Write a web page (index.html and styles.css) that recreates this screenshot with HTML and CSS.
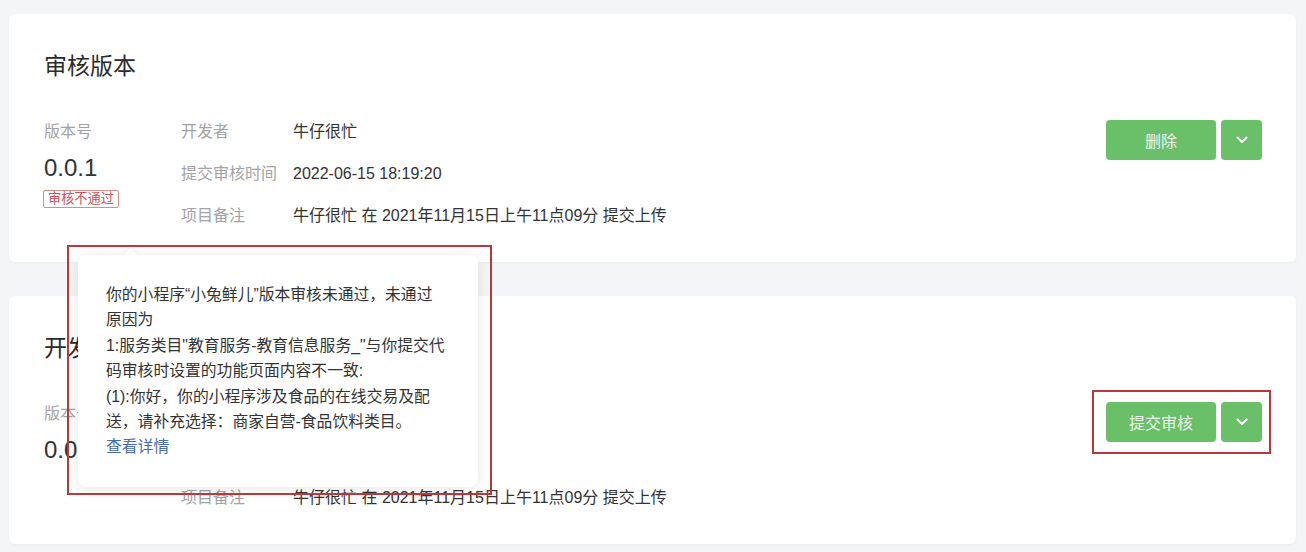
FILE: index.html
```html
<!DOCTYPE html>
<html lang="zh-CN">
<head>
<meta charset="utf-8">
<title>版本管理</title>
<link rel="stylesheet" href="styles.css">
</head>
<body>
<div class="page">
  <section class="card">
    <h2 class="card-title">审核版本</h2>
    <div class="card-body">
      <div class="ver-col">
        <div class="ver-label">版本号</div>
        <div class="ver-num">0.0.1</div>
        <span class="tag-fail">审核不通过</span>
      </div>
      <div class="info">
        <div class="row"><span class="label">开发者</span><span class="value">牛仔很忙</span></div>
        <div class="row"><span class="label">提交审核时间</span><span class="value">2022-06-15 18:19:20</span></div>
        <div class="row"><span class="label">项目备注</span><span class="value">牛仔很忙 在 2021年11月15日上午11点09分 提交上传</span></div>
      </div>
      <div class="actions">
        <button class="btn btn-main">删除</button>
        <button class="btn btn-drop"><svg width="12" height="8" viewBox="0 0 12 8"><path d="M1.5 1.5 L6 6 L10.5 1.5" fill="none" stroke="#fff" stroke-width="2" stroke-linecap="round" stroke-linejoin="round"/></svg></button>
      </div>
    </div>
  </section>

  <section class="card card-second">
    <h2 class="card-title">开发版本</h2>
    <div class="card-body">
      <div class="ver-col">
        <div class="ver-label">版本号</div>
        <div class="ver-num">0.0.1</div>
      </div>
      <div class="info">
        <div class="row"><span class="label">开发者</span><span class="value">牛仔很忙</span></div>
        <div class="row"><span class="label">提交时间</span><span class="value">2021-11-15 11:09:20</span></div>
        <div class="row"><span class="label">项目备注</span><span class="value">牛仔很忙 在 2021年11月15日上午11点09分 提交上传</span></div>
      </div>
      <div class="actions">
        <button class="btn btn-main">提交审核</button>
        <button class="btn btn-drop"><svg width="12" height="8" viewBox="0 0 12 8"><path d="M1.5 1.5 L6 6 L10.5 1.5" fill="none" stroke="#fff" stroke-width="2" stroke-linecap="round" stroke-linejoin="round"/></svg></button>
      </div>
    </div>
  </section>

  <div class="popover">
    <span class="popover-arrow"></span>
    <p class="popover-text">你的小程序“小兔鲜儿”版本审核未通过，未通过原因为<br>1:服务类目"教育服务-教育信息服务_"与你提交代码审核时设置的功能页面内容不一致:<br>(1):你好，你的小程序涉及食品的在线交易及配送，请补充选择：商家自营-食品饮料类目。<br><a class="popover-link" href="#">查看详情</a></p>
  </div>

  <div class="mark mark-popover"></div>
  <div class="mark mark-buttons"></div>
</div>
</body>
</html>
```

FILE: styles.css
```css
* { box-sizing: border-box; }
html, body { margin: 0; padding: 0; }
body {
  background: #f4f5f7;
  font-family: "Liberation Sans", "Noto Sans CJK SC", sans-serif;
  color: #333;
  width: 1306px;
  height: 552px;
  overflow: hidden;
}
.page {
  position: relative;
  padding: 14px 10px 0 9px;
}
.card {
  background: #fff;
  border-radius: 6px;
  height: 248px;
  padding: 37px 34px 0 35px;
  box-shadow: 0 1px 3px rgba(0, 0, 0, 0.04);
}
.card-second { margin-top: 34px; }
.card-title {
  margin: 0;
  font-size: 23px;
  line-height: 30px;
  font-weight: 400;
  color: #2b2b2b;
}
.card-body {
  display: flex;
  align-items: flex-start;
  margin-top: 40px;
}
.ver-col {
  width: 137px;
  display: flex;
  flex-direction: column;
  align-items: flex-start;
}
.ver-label {
  font-size: 16px;
  line-height: 22px;
  color: #a3a3a3;
}
.ver-num {
  margin-top: 11px;
  font-size: 24px;
  line-height: 28px;
  color: #333;
}
.tag-fail {
  margin-top: 8px;
  margin-left: -1px;
  height: 18px;
  padding: 0 4px;
  border: 1px solid #d98a8a;
  border-radius: 2px;
  color: #c9545a;
  font-size: 13.2px;
  line-height: 16px;
}
.info {
  flex: 1;
  display: flex;
  flex-direction: column;
  gap: 20px;
}
.row {
  display: flex;
  font-size: 16px;
  line-height: 22px;
}
.label {
  width: 112px;
  color: #a3a3a3;
}
.value { color: #333; }
.actions {
  display: flex;
  gap: 5px;
  margin-top: -1px;
}
.btn {
  height: 40px;
  border: none;
  border-radius: 4px;
  background: #6abf69;
  color: #eef8ee;
  font-family: inherit;
  font-size: 16px;
  padding: 0;
  display: flex;
  align-items: center;
  justify-content: center;
}
.btn-main { width: 110px; }
.btn-drop { width: 41px; }
.popover {
  position: absolute;
  left: 78px;
  top: 255px;
  width: 400px;
  height: 232px;
  background: #fff;
  border-radius: 8px;
  padding: 27px 31px 27px 28px;
  box-shadow: 0 2px 14px rgba(0, 0, 0, 0.1);
}
.popover-arrow {
  position: absolute;
  left: 47px;
  top: -5px;
  width: 11px;
  height: 11px;
  background: #fff;
  transform: rotate(45deg);
  box-shadow: -2px -2px 4px rgba(0, 0, 0, 0.04);
}
.popover-text {
  position: relative;
  margin: 0;
  width: 341px;
  font-size: 15.8px;
  line-height: 25.4px;
  color: #333;
}
.popover-link {
  color: #4a6cae;
  text-decoration: none;
}
.mark {
  position: absolute;
  border: 2px solid #b8393c;
  pointer-events: none;
}
.mark-popover {
  left: 67px;
  top: 245px;
  width: 425px;
  height: 250px;
}
.mark-buttons {
  left: 1092px;
  top: 390px;
  width: 179px;
  height: 64px;
}
```
